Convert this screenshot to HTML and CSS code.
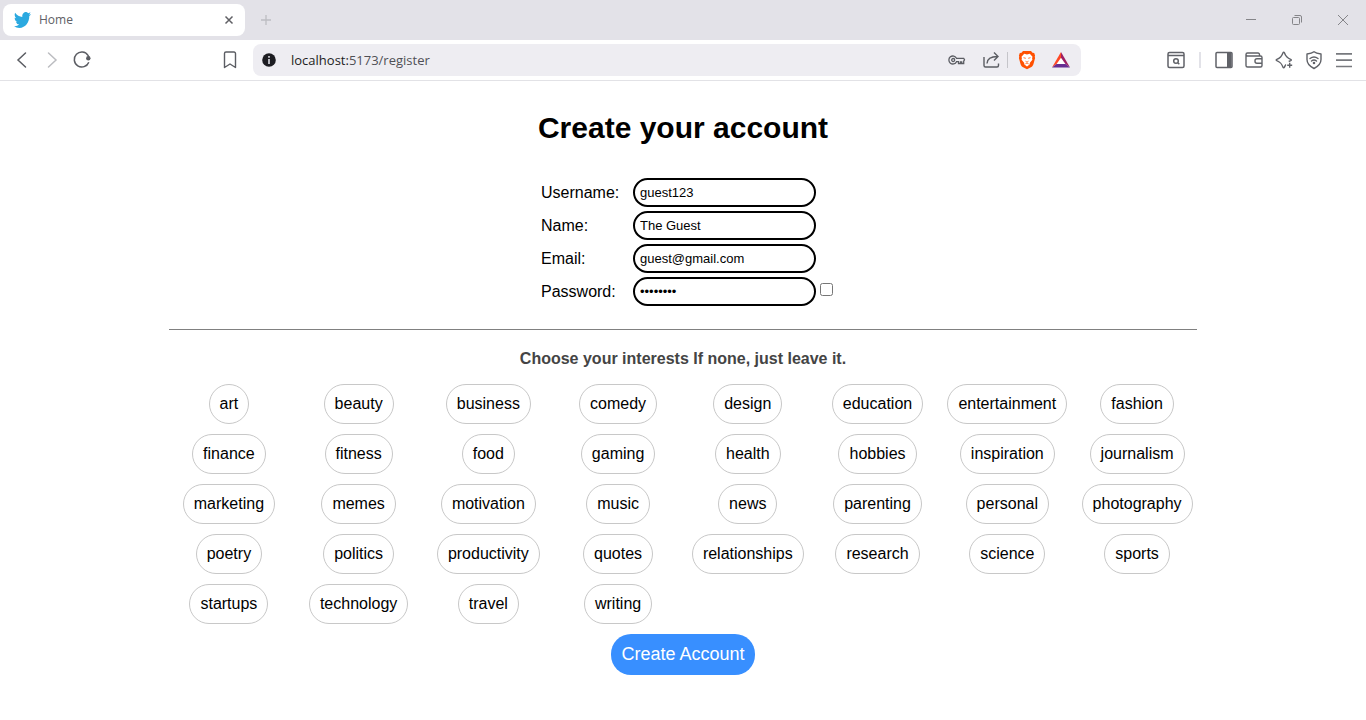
FILE: index.html
```html
<!DOCTYPE html>
<html lang="en">
<head>
<meta charset="utf-8">
<meta name="viewport" content="width=device-width, initial-scale=1">
<title>Home</title>
<link rel="stylesheet" href="styles.css">
</head>
<body>
<header class="browser">
  <div class="tabs">
    <div class="tab">
      <svg class="tab-logo" viewBox="0 2.2 24 19.6" preserveAspectRatio="none" width="17" height="16" aria-hidden="true"><path fill="#2ba9e0" d="M23.95 4.57a10 10 0 0 1-2.82.77 4.96 4.96 0 0 0 2.16-2.72c-.95.55-2 .95-3.13 1.18a4.92 4.92 0 0 0-8.38 4.48C7.69 8.1 4.07 6.13 1.64 3.16a4.82 4.82 0 0 0-.67 2.48c0 1.71.87 3.21 2.19 4.1a4.9 4.9 0 0 1-2.23-.62v.06a4.92 4.92 0 0 0 3.95 4.83 5 5 0 0 1-2.21.08 4.94 4.94 0 0 0 4.6 3.42A9.87 9.87 0 0 1 0 19.54a13.99 13.99 0 0 0 7.56 2.21c9.05 0 14-7.5 14-13.98 0-.21 0-.42-.02-.63a9.94 9.94 0 0 0 2.46-2.55z"/></svg>
      <span class="tab-title">Home</span>
      <button class="icon-btn" aria-label="Close tab"><svg width="14" height="14" viewBox="0 0 14 14" fill="none" stroke="#606065" stroke-width="1.5"><path d="M3.5 3.5l7 7M10.5 3.5l-7 7"/></svg></button>
    </div>
    <button class="icon-btn new-tab" aria-label="New tab"><svg width="14" height="14" viewBox="0 0 14 14" fill="none" stroke="#bdbdc2" stroke-width="1.3"><path d="M7 2v10M2 7h10"/></svg></button>
    <div class="window-buttons">
      <button class="icon-btn" aria-label="Minimize"><svg width="14" height="14" viewBox="0 0 14 14" stroke="#858589"><path d="M2 6.5h10"/></svg></button>
      <button class="icon-btn" aria-label="Restore"><svg width="14" height="14" viewBox="0 0 14 14" fill="none" stroke="#858589"><rect x="2.5" y="4.500" width="7" height="7" rx="1"/><path d="M4.500 2.500h5.500a1.500 1.500 0 0 1 1.500 1.500v5.500"/></svg></button>
      <button class="icon-btn" aria-label="Close"><svg width="14" height="14" viewBox="0 0 14 14" fill="none" stroke="#858589"><path d="M2 2l10 10M12 2L2 12"/></svg></button>
    </div>
  </div>
  <div class="toolbar">
    <div class="nav">
      <button class="icon-btn" aria-label="Back"><svg width="20" height="20" viewBox="0 0 20 20" fill="none" stroke="#5b5d63" stroke-width="1.5" stroke-linecap="round"><path d="M13.500 3L6 10l7.500 7"/></svg></button>
      <button class="icon-btn" aria-label="Forward"><svg width="20" height="20" viewBox="0 0 20 20" fill="none" stroke="#bcbdc1" stroke-width="1.500" stroke-linecap="round"><path d="M6.500 3L14 10l-7.500 7"/></svg></button>
      <button class="icon-btn" aria-label="Reload"><svg width="20" height="20" viewBox="0 0 20 20" fill="none" stroke="#5b5d63" stroke-width="1.5"><path d="M16.800 12.200A7.500 7.500 0 1 1 16 5.300L17 7.500"/><circle cx="16.300" cy="8.200" r="2.200" fill="#5b5d63" stroke="none"/></svg></button>
    </div>
    <button class="icon-btn" aria-label="Bookmark this page"><svg width="20" height="20" viewBox="0 0 20 20" fill="none" stroke="#5b5d63" stroke-width="1.4" stroke-linejoin="round"><path d="M4.500 3.500a1.500 1.500 0 0 1 1.500-1.500h8a1.500 1.500 0 0 1 1.500 1.500v14l-5.500-3.500-5.500 3.500z"/></svg></button>
    <div class="address">
      <svg width="16" height="16" viewBox="0 0 16 16" aria-hidden="true"><circle cx="8" cy="8" r="6.800" fill="#1d1d22"/><path fill="#c8c8cf" d="M7.100 4h1.800v1.700H7.100zM7.100 7h1.800v5H7.100z"/></svg>
      <a class="url" href="#">localhost:<span class="url-path">5173/register</span></a>
      <div class="address-actions">
        <button class="icon-btn" aria-label="Passwords"><svg width="20" height="20" viewBox="0 0 20 20" fill="none" stroke="#5b5d63" stroke-width="1.300"><path d="M9.500 8.300A4 4 0 1 0 9.500 11.700h2v1.800h2v-1.500h1.200v1.500h2v-2.300l.8-1.500-.8-1.400z"/><circle cx="6.200" cy="10" r="1.500"/></svg></button>
        <button class="icon-btn" aria-label="Share"><svg width="20" height="20" viewBox="0 0 20 20" fill="none" stroke="#5b5d63" stroke-width="1.400"><path d="M3 7v8.500a1.500 1.500 0 0 0 1.500 1.500h11.500a1.500 1.500 0 0 0 1.500-1.500v-2M6 13.500c.2-4.500 3-7 10.500-7M13 2.500l4 4-4 4"/></svg></button>
        <span class="divider"></span>
        <button class="icon-btn" aria-label="Brave Shields"><svg width="20" height="20" viewBox="0 0 20 20"><path fill="#ff5000" d="M6 1h8l1.500 1.700 1.700.3.900 2.700-.4 1 .4 1.300-1.700 6.300c-.3 1.200-1 2-2 2.700L10 19.300 5.600 17c-1-.7-1.700-1.500-2-2.700L1.900 8l.4-1.300-.4-1L2.800 3l1.700-.3z"/><path fill="#fff" d="M7.200 3.800l2.800.6 2.800-.6 2.700 3-.4 1.500.3 1.400-2.500 3-.3 1.700L10 16.500l-2.600-2.100-.3-1.700-2.500-3 .3-1.400-.4-1.500z"/><path stroke="#ff5000" stroke-width=".8" fill="none" d="M6.500 7.700l2.300.6M13.500 7.700l-2.300.6M8.500 11.200l1.500 1 1.500-1M8.400 13.800l1.600-.8 1.600.8"/></svg></button>
        <button class="icon-btn" aria-label="Brave Rewards"><svg width="20" height="20" viewBox="0 0 20 20"><path fill="#fff" d="M10 7l5 8H5z"/><path fill="#ff4724" d="M10 2v5.800L5.500 14 1 17.500z"/><path fill="#9e1f63" d="M10 2l9 15.500-4.500-3.500L10 7.800z"/><path fill="#662d91" d="M1 17.500L5.500 14h9l4.500 3.500z"/></svg></button>
      </div>
    </div>
    <div class="tools">
      <button class="icon-btn" aria-label="Search tabs"><svg width="20" height="20" viewBox="0 0 20 20" fill="none" stroke="#606268" stroke-width="1.500"><rect x="2" y="2.500" width="16" height="15" rx="1.500"/><path d="M2 5.500h16M11.800 12.800l1.500 1.500"/><circle cx="10" cy="11" r="2.300"/></svg></button>
      <span class="divider"></span>
      <button class="icon-btn" aria-label="Sidebar"><svg width="20" height="20" viewBox="0 0 20 20" fill="none" stroke="#606268" stroke-width="1.500"><rect x="2" y="2.500" width="16" height="15" rx="1"/><path fill="#606268" stroke="none" d="M13 2h4.500v16H13z"/></svg></button>
      <button class="icon-btn" aria-label="Wallet"><svg width="20" height="20" viewBox="0 0 20 20" fill="none" stroke="#606268" stroke-width="1.400"><path d="M15.500 6V4.500A1.500 1.500 0 0 0 14 3H3.500A1.500 1.500 0 0 0 2 4.500v11A1.500 1.500 0 0 0 3.500 17h13a1.500 1.500 0 0 0 1.500-1.500V7.500A1.500 1.500 0 0 0 16.500 6H3.500A1.500 1.500 0 0 1 2 4.500M18 8.700h-5a2 2 0 0 0-2 2v.6a2 2 0 0 0 2 2h5"/></svg></button>
      <button class="icon-btn" aria-label="Leo AI"><svg width="20" height="20" viewBox="0 0 20 20" fill="none" stroke="#606268" stroke-width="1.400" stroke-linejoin="round"><path d="M12 14.500c-.8.500-1 1.700-1.600 2.700-.4.800-1 .8-1.400 0C7.800 14 7 12.300 2.800 10.600c-.8-.4-.8-1 0-1.300C6.500 8 7.700 6.500 9 2.700c.4-.8 1-.8 1.400 0 1.200 3.700 2.700 5.200 6.300 6.600.8.300.8.900 0 1.300l-2 .9M15.700 12.700v5M13.200 15.200h5"/></svg></button>
      <button class="icon-btn" aria-label="VPN"><svg width="20" height="20" viewBox="0 0 20 20" fill="none" stroke="#606268" stroke-width="1.400" stroke-linecap="round"><path stroke-linejoin="round" d="M10 1.700c2 1.700 4.300 2 7 2.300v5.500c0 4.500-3 7-7 9-4-2-7-4.500-7-9V4c2.700-.3 5-.6 7-2.300zM6 8.500c2.300-1.800 5.700-1.800 8 0M7.500 11c1.500-1.100 3.500-1.100 5 0"/><circle cx="10" cy="13" r=".6" fill="#606268"/></svg></button>
      <button class="icon-btn" aria-label="Menu"><svg width="20" height="20" viewBox="0 0 20 20" fill="none" stroke="#77797e" stroke-width="1.700"><path d="M2 3.800h16M2 10.200h16M2 16.500h16"/></svg></button>
    </div>
  </div>
</header>

<main class="page">
  <form class="register" action="#">
    <h1 class="title">Create your account</h1>
    <div class="fields">
      <label for="username">Username:</label>
      <input class="field" id="username" type="text" value="guest123">
      <label for="name">Name:</label>
      <input class="field" id="name" type="text" value="The Guest">
      <label for="email">Email:</label>
      <input class="field" id="email" type="email" value="guest@gmail.com">
      <label for="password">Password:</label>
      <div class="password">
        <input class="field" id="password" type="password" value="guest123">
        <input class="show" type="checkbox" aria-label="Show password">
      </div>
    </div>
    <hr class="rule">
    <h2 class="subtitle">Choose your interests If none, just leave it.</h2>
    <div class="interests">
      <button type="button" class="pill">art</button>
      <button type="button" class="pill">beauty</button>
      <button type="button" class="pill">business</button>
      <button type="button" class="pill">comedy</button>
      <button type="button" class="pill">design</button>
      <button type="button" class="pill">education</button>
      <button type="button" class="pill">entertainment</button>
      <button type="button" class="pill">fashion</button>
      <button type="button" class="pill">finance</button>
      <button type="button" class="pill">fitness</button>
      <button type="button" class="pill">food</button>
      <button type="button" class="pill">gaming</button>
      <button type="button" class="pill">health</button>
      <button type="button" class="pill">hobbies</button>
      <button type="button" class="pill">inspiration</button>
      <button type="button" class="pill">journalism</button>
      <button type="button" class="pill">marketing</button>
      <button type="button" class="pill">memes</button>
      <button type="button" class="pill">motivation</button>
      <button type="button" class="pill">music</button>
      <button type="button" class="pill">news</button>
      <button type="button" class="pill">parenting</button>
      <button type="button" class="pill">personal</button>
      <button type="button" class="pill">photography</button>
      <button type="button" class="pill">poetry</button>
      <button type="button" class="pill">politics</button>
      <button type="button" class="pill">productivity</button>
      <button type="button" class="pill">quotes</button>
      <button type="button" class="pill">relationships</button>
      <button type="button" class="pill">research</button>
      <button type="button" class="pill">science</button>
      <button type="button" class="pill">sports</button>
      <button type="button" class="pill">startups</button>
      <button type="button" class="pill">technology</button>
      <button type="button" class="pill">travel</button>
      <button type="button" class="pill">writing</button>
    </div>
    <button type="submit" class="submit">Create Account</button>
  </form>
</main>
</body>
</html>
```

FILE: styles.css
```css
* {
  box-sizing: border-box;
}

body {
  margin: 0;
  background: #fff;
  color: #000;
  font: 16px/18px "Liberation Sans", Arial, sans-serif;
}

button {
  font-family: inherit;
  cursor: pointer;
}

/* Browser bar */
.browser {
  border-bottom: 1px solid #e2e2e6;
  font-family: "Open Sans", "Noto Sans", sans-serif;
}

.icon-btn {
  display: flex;
  padding: 0;
  border: 0;
  background: none;
}

.tabs {
  display: flex;
  align-items: center;
  height: 40px;
  padding: 0 16px 0 3px;
  background: #e3e2e8;
}

.tab {
  display: flex;
  align-items: center;
  gap: 8px;
  width: 242px;
  height: 32px;
  padding: 0 9px 0 11px;
  border-radius: 8px;
  background: #fff;
}

.tab-title {
  flex: 1;
  color: #606065;
  font-size: 12px;
}

.new-tab {
  margin-left: 14px;
}

.window-buttons {
  display: flex;
  gap: 32px;
  margin-left: auto;
}

.toolbar {
  display: flex;
  align-items: center;
  height: 40px;
  padding: 0 12px;
}

.nav {
  display: flex;
  gap: 10px;
  margin-right: 128px;
}

.address {
  display: flex;
  flex: 1;
  align-items: center;
  height: 32px;
  margin: 0 85px 0 13px;
  padding: 0 10px 0 8px;
  border-radius: 8px;
  background: #eeedf2;
}

.url {
  margin-left: 14px;
  color: #1d1d22;
  font-size: 13px;
  text-decoration: none;
}

.url-path {
  color: #505056;
}

.address-actions {
  display: flex;
  align-items: center;
  gap: 14px;
  margin-left: auto;
}

.divider {
  width: 1px;
  height: 16px;
  background: #c5c5ca;
}

.address-actions .divider {
  margin: 0 -5px 0 -8px;
}

.tools {
  display: flex;
  align-items: center;
  gap: 10px;
}

.tools .divider {
  width: 2px;
  margin: 0 3px;
  background: #e2e2e8;
}

/* Registration page */
.register {
  display: flex;
  flex-direction: column;
  align-items: center;
  width: 75.25%;
  margin: 0 auto;
  padding: 29px 0 40px;
}

.title {
  margin: 0 0 32px;
  font-size: 30px;
  line-height: 36px;
}

.fields {
  display: grid;
  grid-template-columns: 92px auto;
  row-gap: 4px;
  align-items: center;
  padding-left: 8px;
}

.field {
  width: 183px;
  height: 29px;
  padding: 5px;
  border: 2px solid #000;
  border-radius: 15px;
  background: #fff;
  color: #000;
  font: 13px/15px "Liberation Sans", Arial, sans-serif;
}

.password {
  display: flex;
  align-items: center;
  gap: 4px;
}

.show {
  width: 13px;
  height: 13px;
  margin: 0 0 4px;
}

.rule {
  width: 100%;
  margin: 23px 0 20px;
  border: 0;
  border-top: 1px solid #808080;
}

.subtitle {
  margin: 0 0 16px;
  color: #444;
  font-size: 16px;
}

.interests {
  display: grid;
  grid-template-columns: repeat(8, 1fr);
  gap: 10px;
  justify-items: center;
  width: 100%;
}

.pill {
  padding: 10px;
  border: 1px solid #c8c8c8;
  border-radius: 20px;
  background: #fff;
  color: #000;
  font-size: 16px;
  line-height: 18px;
}

.submit {
  margin-top: 10px;
  padding: 10px;
  border: 0;
  border-radius: 20px;
  background: #388fff;
  color: #fff;
  font-size: 18px;
  line-height: 21px;
}
```
